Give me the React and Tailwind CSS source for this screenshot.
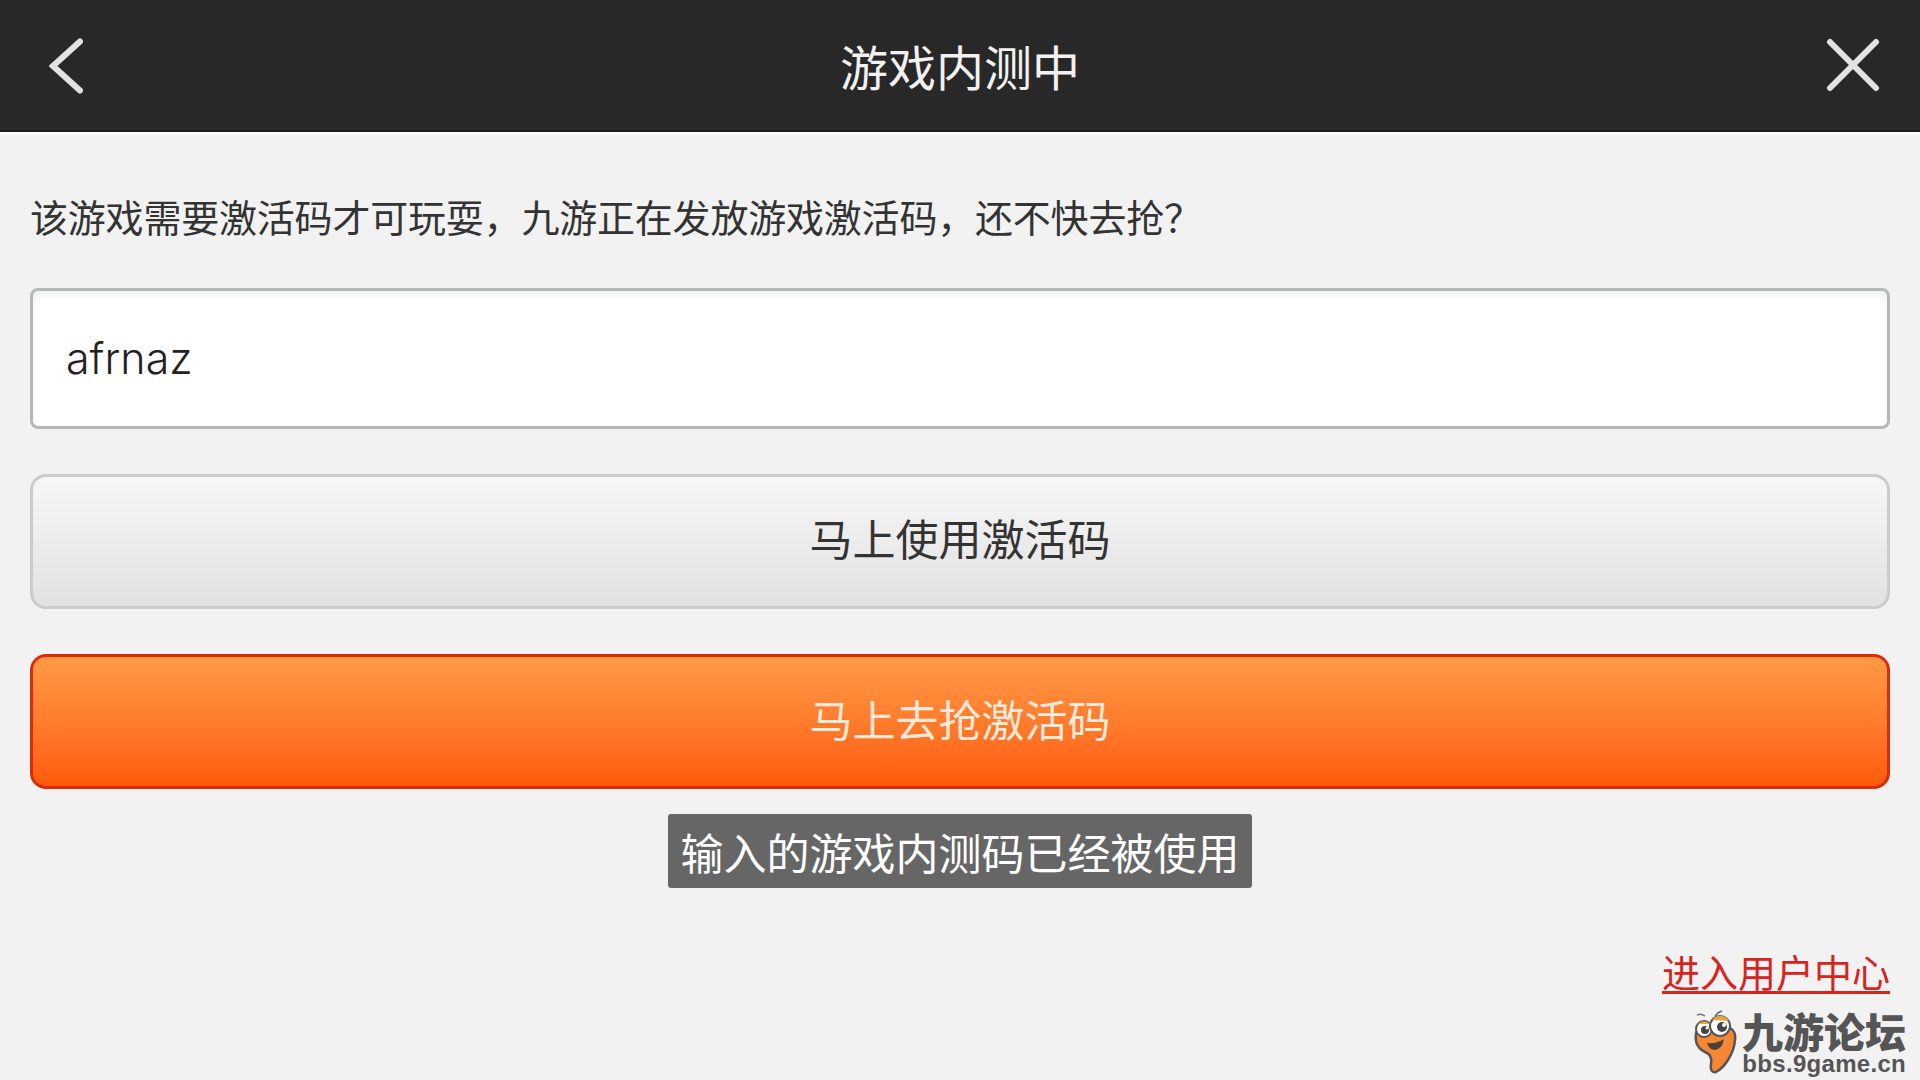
import React from "react";

const cjk = "font-['Noto_Sans_CJK_SC','Liberation_Sans',sans-serif]";

// Mascot of the forum watermark
const Mascot = () => (
  <svg width="44" height="66" viewBox="0 0 44 66" className="shrink-0">
    <path d="M4 5 Q8 3 12 6" fill="none" stroke="#777" strokeWidth="1.5" />
    <path d="M22 6 Q25 2 29 1" fill="none" stroke="#666" strokeWidth="1.5" />
    <path
      d="M4 20 C1 29 3 38 12 42 C17 44 19 48 18 54 C17 60 19 63 23 62 C31 58 41 44 42 30 C43 23 40 19 36 18 L8 18 Z"
      fill="#f58634"
      stroke="#555"
      strokeWidth="2.5"
      strokeLinejoin="round"
    />
    <circle cx="11" cy="19" r="8" fill="#fff" stroke="#555" strokeWidth="2" />
    <circle cx="27" cy="16" r="10" fill="#fff" stroke="#555" strokeWidth="2" />
    <path d="M5 14 A8 8 0 0 1 17 14 Z" fill="#e0a93a" />
    <path d="M19 10 A10 10 0 0 1 36 11 Z" fill="#e0a93a" />
    <circle cx="12" cy="20" r="4" fill="#444" />
    <circle cx="29" cy="17" r="5" fill="#444" />
    <circle cx="14" cy="18" r="1.5" fill="#fff" />
    <circle cx="31" cy="15" r="2" fill="#fff" />
    <path d="M14 33 Q24 34 31 29 Q29 40 21 40 Q16 39 14 33 Z" fill="#4a4038" />
  </svg>
);

export default function App() {
  return (
    <div className={`relative h-[1080px] w-[1920px] overflow-hidden bg-[#f2f2f2] ${cjk}`}>
      {/* top bar */}
      <header className="flex h-[132px] items-center justify-between border-b-2 border-[#1a1a1a] bg-[#282828] px-[40px] shadow-[0_3px_0_#fbfbfb]">
        <div className="w-[100px] pl-[9px]">
          <svg width="34" height="56" viewBox="0 0 34 56" className="mt-[2px]">
            <path d="M31 3.5 L4 28 L31 52.5" fill="none" stroke="#e2e2e2" strokeWidth="6" strokeLinecap="round" />
          </svg>
        </div>
        <h1 className="text-[48px] font-normal leading-none text-[#f2f2f2]">游戏内测中</h1>
        <div className="flex w-[100px] justify-end">
          <svg width="54" height="54" viewBox="0 0 54 54">
            <path d="M4 4 L50 50 M50 4 L4 50" fill="none" stroke="#e2e2e2" strokeWidth="6" strokeLinecap="round" />
          </svg>
        </div>
      </header>

      <main className="flex flex-col px-[30px]">
        <p className="mt-[59px] h-[50px] text-[38px] leading-[50px] tracking-[-0.2px] text-[#333]">
          该游戏需要激活码才可玩耍，九游正在发放游戏激活码，还不快去抢？
        </p>

        <input
          readOnly
          value="afrnaz"
          className="mt-[47px] h-[141px] w-full rounded-[8px] border-[3px] border-[#b4b9b5] bg-white pb-[2px] pl-[33px] font-['Inter',sans-serif] text-[43px] font-light text-[#222] shadow-[inset_0_4px_8px_#eef0ee] outline-none"
        />

        <button className="mt-[45px] h-[135px] w-full rounded-[16px] border-[3px] border-[#cbcbcb] bg-gradient-to-b from-[#f7f7f7] to-[#e1e1e1] pb-[9px] text-[43px] text-[#333]">
          马上使用激活码
        </button>

        <button className="mt-[45px] h-[135px] w-full rounded-[16px] border-[3px] border-[#dc2a0a] bg-gradient-to-b from-[#ff9a45] to-[#ff5a08] pb-[7px] text-[43px] text-[#fbe9da]">
          马上去抢激活码
        </button>

        <div className="mt-[25px] flex justify-center">
          <div className="flex h-[74px] w-[584px] items-center justify-center rounded-[3px] bg-[#666] text-[43px] text-white">
            输入的游戏内测码已经被使用
          </div>
        </div>

        <div className="mt-[58px] flex justify-end">
          <a className="text-[38px] leading-[50px] text-[#d9231f] underline decoration-[3px] underline-offset-[4px]">
            进入用户中心
          </a>
        </div>
      </main>

      {/* forum watermark */}
      <div className="absolute bottom-[4px] right-[14px] flex items-end gap-[5px]">
        <Mascot />
        <div className="flex flex-col items-end">
          <span className="text-[41px] font-black leading-[44px] text-[#555]">九游论坛</span>
          <span className="font-['Liberation_Sans',sans-serif] text-[24px] font-bold leading-[24px] tracking-[0.3px] text-[#555]">
            bbs.9game.cn
          </span>
        </div>
      </div>
    </div>
  );
}
